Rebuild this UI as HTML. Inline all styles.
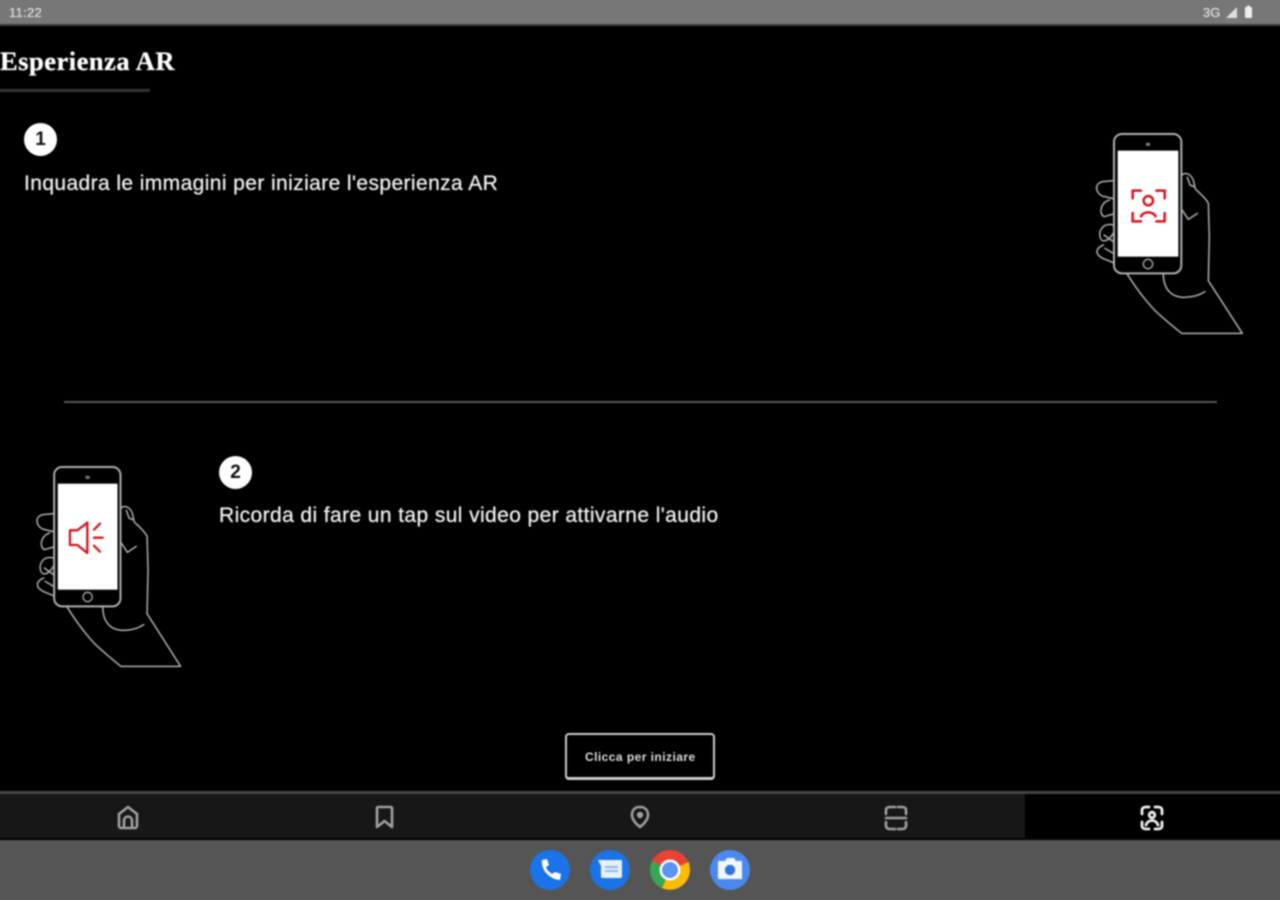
<!DOCTYPE html>
<html lang="it"><head><meta charset="utf-8"><title>Esperienza AR</title>
<style>
html,body{margin:0;padding:0;background:#000}
#root{position:relative;width:1280px;height:900px;overflow:hidden;background:#000}
#in{position:absolute;left:0;top:0;width:1280px;height:900px;filter:blur(.7px);font-family:"Liberation Sans",sans-serif;color:#eee}
.a{position:absolute}
.t{position:absolute;white-space:nowrap;line-height:1}
.body{font-size:21px;color:#f0f0f0;letter-spacing:.4px;text-shadow:0 0 .7px #fff}
.num{position:absolute;width:33px;height:33px;border-radius:50%;background:#fff;color:#111;font:bold 19px/33px "Liberation Sans",sans-serif;text-align:center}
svg{position:absolute;overflow:visible}
</style></head><body>
<div id="root"><div id="in">
<div class="a" style="left:-10px;top:-10px;width:1300px;height:34px;background:#777"></div>
<div class="a" style="left:-10px;top:24px;width:1300px;height:2px;background:#3a3a3a"></div>
<div class="t" style="left:9px;top:6px;font-size:13px;color:#ddd;letter-spacing:.3px;text-shadow:0 0 .5px #fff">11:22</div>
<div class="t" style="left:1203px;top:6px;font-size:13px;color:#ddd;text-shadow:0 0 .5px #fff">3G</div>
<svg style="left:0;top:0" width="1280" height="26"><path d="M1226 18 L1237 7 V18 Z" fill="#ddd"/><rect x="1245" y="7" width="7" height="11" rx="1" fill="#eee"/><rect x="1247" y="5.6" width="3" height="2" fill="#eee"/></svg>

<div class="t" style="left:0;top:48px;font:bold 26.5px/1 'Liberation Serif',serif;color:#fff;letter-spacing:.5px;text-shadow:0 0 .8px #fff">Esperienza AR</div>
<div class="a" style="left:-10px;top:89px;width:160px;height:3px;background:#333"></div>

<div class="num" style="left:24px;top:123px">1</div>
<div class="t body" style="left:24px;top:173px">Inquadra le immagini per iniziare l'esperienza AR</div>

<div class="a" style="left:64px;top:401px;width:1153px;height:2px;background:#555"></div>

<div class="num" style="left:219px;top:456px">2</div>
<div class="t body" style="left:219px;top:505px">Ricorda di fare un tap sul video per attivarne l'audio</div>

<svg width="0" height="0" style="left:0;top:0"><defs>
<g id="hand" fill="none" stroke="#b0b0b0" stroke-width="4.5" stroke-linejoin="round" stroke-linecap="round">
<path d="M305 165 C318 155 332 162 340 180 L346 207 C362 222 378 235 385 250 L388 350 L385 482 L487 640 H305 C280 620 250 595 225 572 C195 540 165 500 140 460"/>
<path d="M322 172 L330 195 L342 200"/>
<path d="M250 462 C250 505 272 532 312 532 C340 532 360 525 375 515"/>
<path d="M305 268 L325 298 L352 280"/>
<path d="M100 182 L68 185 C44 190 44 215 66 228 L100 236"/>
<path d="M88 240 C62 248 55 280 72 290 L100 282"/>
<path d="M100 315 C70 308 56 330 60 350 C62 365 80 372 100 340"/>
<path d="M70 375 C46 385 44 402 68 415 L100 428 M72 345 L100 365 M75 385 L100 400"/>
<rect x="102" y="42" width="202" height="418" rx="24" fill="#000" stroke-width="6"/>
<rect x="113" y="92" width="182" height="318" fill="#fff" stroke="none"/>
<ellipse cx="204" cy="73" rx="7" ry="5" fill="#777" stroke="none"/>
<circle cx="204" cy="432" r="14" stroke-width="4"/>
</g></defs></svg>

<svg style="left:1080px;top:120px" width="180" height="225" viewBox="0 0 540 675">
<use href="#hand"/>
<g fill="none" stroke="#d8141c" stroke-width="7.5">
<path d="M158 238 V212 H186 M226 212 H254 V238 M158 276 V304 H186 M226 304 H254 V276"/>
<circle cx="205" cy="242" r="14"/>
<path d="M182 292 C188 272 222 272 228 292"/>
</g></svg>

<svg style="left:20px;top:452.5px" width="180" height="225" viewBox="0 0 540 675">
<use href="#hand" transform="translate(2 0) scale(.985 1)"/>
<g fill="none" stroke="#d8141c" stroke-width="7" stroke-linejoin="round" stroke-linecap="round">
<path d="M150 232 H172 L202 209 V300 L172 276 H150 Z"/>
<path d="M222 230 L240 212 M222 254 H248 M222 278 L240 296"/>
</g></svg>

<div class="a" style="left:565px;top:733px;width:146px;height:42px;border:2px solid #ccc;border-bottom-width:3px;border-radius:4px;background:#000"></div>
<div class="t" style="left:585px;top:751px;font-size:12px;font-weight:bold;color:#ddd;letter-spacing:.45px">Clicca per iniziare</div>

<div class="a" style="left:-10px;top:791px;width:1300px;height:3px;background:#454545"></div>
<div class="a" style="left:-10px;top:794px;width:1035px;height:44px;background:#171717"></div>
<div class="a" style="left:1025px;top:794px;width:265px;height:44px;background:#000"></div>
<div class="a" style="left:-10px;top:840px;width:1300px;height:70px;background:#555"></div>

<svg style="left:0;top:790px" width="1280" height="50" fill="none" stroke-linejoin="round" stroke-linecap="round">
<g stroke="#a0a0a0" stroke-width="2.6">
<path d="M119 24 L128 17 L137 24 V36 C137 37 136 38 135 38 H121 C120 38 119 37 119 36 Z"/>
<path d="M124 37 V31 C124 25 132 25 132 31 V37"/>
<path d="M377 18 C377 17 378 17 379 17 H390 C391 17 392 17 392 18 V37 L384.500 31 L377 37 Z"/>
<path d="M640 37 C635 33 632 29 632 25 C632 20 635 17 640 17 C645 17 648 20 648 25 C648 29 645 33 640 37 Z"/>
<path d="M886 24 V20 C886 18 888 17 890 17 H895 M898 17 H902 C904 17 906 18 906 20 V24 M886 32 V36 C886 38 888 39 890 39 H895 M898 39 H902 C904 39 906 38 906 36 V32 M886 28 H906"/>
</g>
<circle cx="640" cy="25" r="3.2" fill="#a0a0a0"/>
<g stroke="#eee" stroke-width="2.8">
<path d="M1142 24 V20 C1142 18 1144 17 1146 17 H1149 M1155 17 H1158 C1160 17 1162 18 1162 20 V24 M1142 32 V36 C1142 38 1144 39 1146 39 H1149 M1155 39 H1158 C1160 39 1162 38 1162 36 V32"/>
<circle cx="1152" cy="25" r="2.8"/>
<path d="M1146 35 C1148 29 1156 29 1158 35"/>
</g>
</svg>

<svg style="left:0;top:840px" width="1280" height="60">
<circle cx="550" cy="30" r="20" fill="#1a73e8"/>
<path d="M542 20 C541 30 549 39 560 40 L561 34 L555 32 L552 34 C549 32 547 30 546 27 L549 25 L547 19 Z" fill="#fff"/>
<circle cx="610" cy="30" r="20" fill="#1a73e8"/>
<path d="M598 20 H621 C622 20 622 21 622 22 V36 C622 38 621 38 620 38 H603 C601 38 601 37 601 36 V26 Z" fill="#e8f0fe"/>
<path d="M605 27 H618 M605 31 H618" stroke="#8ab4f8" stroke-width="2"/>
<circle cx="670" cy="30" r="20" fill="#ea4335"/>
<path d="M670 30 L652 21 A20 20 0 0 0 662 48 Z" fill="#34a853"/>
<path d="M670 30 L662 48 A20 20 0 0 0 690 30 L689 22 Z" fill="#fbbc04"/>
<circle cx="670" cy="30" r="10.5" fill="#fff"/><circle cx="670" cy="30" r="8" fill="#5a94f5"/>
<circle cx="730" cy="30" r="20" fill="#4a8af0"/>
<path d="M718 21 H725 L727 18 H734 L736 21 H742 V39 H718 Z" fill="#f2f6fe"/>
<circle cx="730" cy="30" r="5.2" fill="#2f72e0"/>
</svg>
</div></div>
</body></html>
